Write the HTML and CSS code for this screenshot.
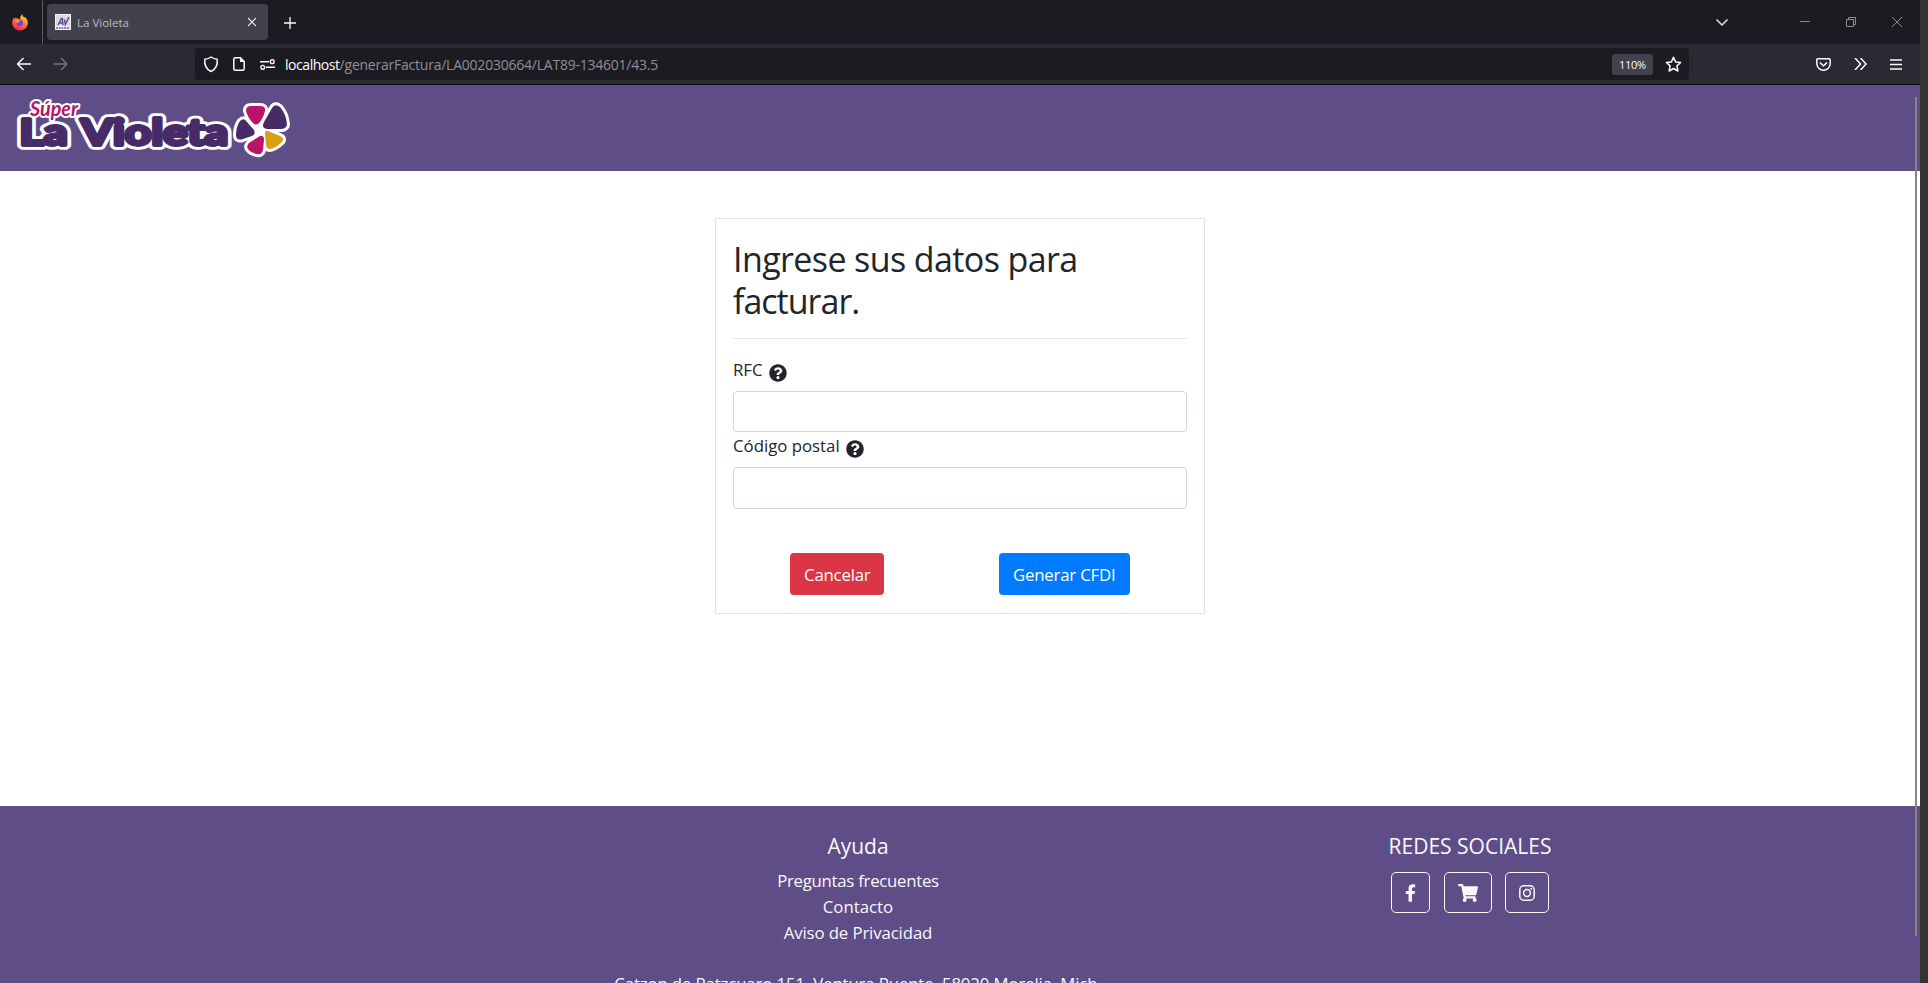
FILE: index.html
```html
<!DOCTYPE html>
<html lang="es">
<head>
<meta charset="utf-8">
<title>La Violeta</title>
<link rel="stylesheet" href="styles.css">
</head>
<body>
<div class="window">
  <div class="tabbar">
    <div class="ff">
      <svg width="16" height="17" viewBox="0 0 16 17"><defs><linearGradient id="fg" x1=".8" y1="0" x2=".3" y2="1"><stop offset="0" stop-color="#ffe23c"/><stop offset=".45" stop-color="#ff8a1c"/><stop offset="1" stop-color="#f5156c"/></linearGradient></defs><path d="M10.3.2C10 2 12 3 12.600 3.800c.2-.7.100-1 .1-1C15 4.500 16 7 15.800 9.300 15.500 13.500 12 16.500 8 16.500S.3 13.300.2 9.200C.1 7 1 5 2 3.800l.3 1.300L4 3.200l.6 1.500C6 4.500 7 4.700 8 5.200 8 3 9 1 10.300.2z" fill="url(#fg)"/><circle cx="7.700" cy="8.900" r="3.300" fill="#7a3fe0"/><path d="M3.500 6.500C6 5 7 6.500 8.300 7 7.500 8.200 6 8 5.500 9 4.500 9 3.500 8 3.500 6.500z" fill="#ff9a22"/></svg>
    </div>
    <div class="tab">
      <svg class="favicon" width="16" height="16" viewBox="0 0 16 16"><path fill="#f7f5f9" d="M0 0h16v16H0z"/><path fill="#dcd8e2" d="M1 1h14v11H1z"/><path d="M3 11 6.500 4.500h.8l.7 6.500M4.500 9h3.500M9.500 5.500l.8 5 3.700-7.500" fill="none" stroke="#5b4a8a" stroke-width="1.400"/><path d="M1 14h14" stroke="#6b5a98" stroke-width="1.500" stroke-dasharray="2 .7"/></svg>
      <span class="tab-title">La Violeta</span>
      <svg class="tab-close" width="10" height="10" viewBox="0 0 10 10"><path d="m1 1 8 8M9 1 1 9" stroke="#e8e8ec" stroke-width="1.100"/></svg>
    </div>
    <svg class="newtab" width="12" height="12" viewBox="0 0 12 12"><path d="M6 0v12M0 6h12" stroke="#fbfbfe" stroke-width="1.300"/></svg>
    <div class="controls">
      <svg width="14" height="9" viewBox="0 0 14 9"><path d="m1.500 1.500 5.500 5.500 5.500-5.500" fill="none" stroke="#e6e6ea" stroke-width="1.500"/></svg>
      <svg class="c-min" width="10" height="10" viewBox="0 0 10 10"><path d="M0 4.500h10" stroke="#8c8b90"/></svg>
      <svg class="c-max" width="10" height="10" viewBox="0 0 10 10"><path d="M.5 2.500h7v7h-7zM2.500 2.500v-2h7v7h-2" fill="none" stroke="#8c8b90"/></svg>
      <svg class="c-close" width="10" height="10" viewBox="0 0 10 10"><path d="m0 0 10 10M10 0 0 10" stroke="#8c8b90"/></svg>
    </div>
  </div>
  <div class="toolbar">
    <svg class="back" width="15" height="14" viewBox="0 0 15 14"><path d="M14 7H.5M6.500 1l-6 6 6 6" fill="none" stroke="#fbfbfe" stroke-width="1.500"/></svg>
    <svg class="fwd" width="15" height="14" viewBox="0 0 15 14"><path d="M.5 7H14M8 1l6 6-6 6" fill="none" stroke="#77767c" stroke-width="1.300"/></svg>
    <div class="urlbar">
      <svg class="shield" width="16" height="17" viewBox="0 0 16 17"><path d="M8 1c2 1.500 4 2 6.200 2.200.5 5-1 9.800-6.200 12.300C2.800 13 1.300 8.200 1.800 3.200 4 3 6 2.500 8 1z" fill="none" stroke="#fbfbfe" stroke-width="1.500" stroke-linejoin="round"/></svg>
      <svg class="page" width="12" height="14" viewBox="0 0 12 14"><path d="M7.500.8H2.300Q.8.800.8 2.300v9.400q0 1.500 1.500 1.500h7.400q1.500 0 1.500-1.500V4.500z" fill="none" stroke="#fbfbfe" stroke-width="1.500"/><path d="M7 .5V5h4.500z" fill="#fbfbfe"/></svg>
      <svg class="perm" width="15" height="11" viewBox="0 0 15 11"><g fill="none" stroke="#fbfbfe" stroke-width="1.400"><path d="M0 2.700h9M6 8.300h9"/><circle cx="12.200" cy="2.700" r="1.900"/><circle cx="2.700" cy="8.300" r="1.900"/></g></svg>
      <span class="url"><span class="host">localhost</span><span class="path">/generarFactura/LA002030664/LAT89-134601/43.5</span></span>
      <span class="zoom">110%</span>
      <svg class="star" width="17" height="17" viewBox="0 0 17 17"><path d="m8.500 1.300 2.100 4.600 5 .6-3.700 3.400 1 5.100-4.400-2.500L4.100 15l1-5.100L1.400 6.500l5-.6z" fill="none" stroke="#fbfbfe" stroke-width="1.500" stroke-linejoin="round"/></svg>
    </div>
    <div class="tools">
      <svg width="15" height="13" viewBox="0 0 15 13"><path d="M2 .8h11q1.200 0 1.200 1.200v3.500a6.700 6.700 0 0 1-13.400 0V2Q.8.800 2 .8z" fill="none" stroke="#fbfbfe" stroke-width="1.500"/><path d="m4 4.500 3.500 3.300L11 4.500" fill="none" stroke="#fbfbfe" stroke-width="1.600"/></svg>
      <svg width="13" height="12" viewBox="0 0 13 12"><path d="m1 0 5.500 6L1 12M6.500 0 12 6l-5.500 6" fill="none" stroke="#fbfbfe" stroke-width="1.500"/></svg>
      <svg width="12" height="11" viewBox="0 0 12 11"><path d="M0 1h12M0 5.500h12M0 10h12" stroke="#fbfbfe" stroke-width="1.300"/></svg>
    </div>
  </div>
  <header class="site-head">
    <svg class="logo" width="290" height="86" viewBox="0 0 290 86">
      <defs>
        <path id="p1" d="M246 26q0-5 5-5h9q6 0 5 5-2 8-6 12-3 3-6 0-5-5-7-12z"/>
        <path id="p2" d="M264 37l8-14q3-5 8-1 6 7 7 17 0 4-5 5h-15q-6-1-3-7z"/>
        <path id="p3" d="M240 36q4-4 7 1l7 8q2 4-2 6l-9 3q-7 2-7-4 0-8 4-14z"/>
        <path id="p4" d="M268 46l12 5q5 2 2 6-6 6-12 7-4 0-4-5l-1-10q0-4 3-3z"/>
        <path id="p5" d="M260 51q4-1 4 4l-1 10q-1 5-6 4-6-1-9-5-2-3 1-6z"/>
      </defs>
      <g class="halo"><g id="wordmark" class="wordmark"><text x="19.500" y="59.500" textLength="48" lengthAdjust="spacingAndGlyphs">La</text><text x="81" y="59.500" textLength="147" lengthAdjust="spacingAndGlyphs">Violeta</text></g></g>
      <use class="letters" href="#wordmark"/>
      <g class="petal-halo"><use href="#p1"/><use href="#p2"/><use href="#p3"/><use href="#p4"/><use href="#p5"/><circle cx="260" cy="44" r="5"/></g>
      <use href="#p1" fill="#ba146a"/><use href="#p2" fill="#472a68"/><use href="#p3" fill="#472a68"/><use href="#p4" fill="#d9a017"/><use href="#p5" fill="#ba146a"/>
      <text class="super" x="30" y="31" textLength="48" lengthAdjust="spacingAndGlyphs">Súper</text>
    </svg>
  </header>
  <main class="content">
    <section class="card">
      <h2>Ingrese sus datos para<br><span class="h2-end">facturar.</span></h2>
      <hr>
      <label class="lbl"><span>RFC</span><svg width="18" height="18" viewBox="0 0 512 512"><path fill="#212529" d="M504 256c0 137-111 248-248 248S8 393 8 256 119 8 256 8s248 111 248 248zM262.700 90c-54.500 0-89.300 23-116.500 63.800-3.600 5.300-2.400 12.400 2.700 16.300l34.700 26.300c5.200 3.900 12.600 3 16.700-2.100 17.900-22.700 30.100-35.800 57.300-35.800 20.400 0 45.700 13.100 45.700 33 0 15-12.400 22.700-32.500 34C247.100 238.500 216 254.900 216 296v4c0 6.600 5.400 12 12 12h56c6.600 0 12-5.400 12-12v-1.300c0-28.500 83.200-29.600 83.200-106.700 0-58-60.200-102-116.500-102zM256 338c-25.400 0-46 20.600-46 46s20.600 46 46 46 46-20.600 46-46-20.600-46-46-46z"/></svg></label>
      <input class="field" type="text">
      <label class="lbl"><span>Código postal</span><svg width="18" height="18" viewBox="0 0 512 512"><path fill="#212529" d="M504 256c0 137-111 248-248 248S8 393 8 256 119 8 256 8s248 111 248 248zM262.700 90c-54.500 0-89.300 23-116.500 63.800-3.600 5.300-2.400 12.400 2.700 16.300l34.700 26.300c5.200 3.900 12.600 3 16.700-2.100 17.900-22.700 30.100-35.800 57.300-35.800 20.400 0 45.700 13.100 45.700 33 0 15-12.400 22.700-32.500 34C247.100 238.500 216 254.900 216 296v4c0 6.600 5.400 12 12 12h56c6.600 0 12-5.400 12-12v-1.300c0-28.500 83.200-29.600 83.200-106.700 0-58-60.200-102-116.500-102zM256 338c-25.400 0-46 20.600-46 46s20.600 46 46 46 46-20.600 46-46-20.600-46-46-46z"/></svg></label>
      <input class="field tall" type="text">
      <div class="actions">
        <button class="btn cancel">Cancelar</button>
        <button class="btn generate">Generar CFDI</button>
      </div>
    </section>
  </main>
  <footer class="foot">
    <div class="help">
      <h5>Ayuda</h5>
      <a class="faq">Preguntas frecuentes</a>
      <a class="contact">Contacto</a>
      <a class="privacy">Aviso de Privacidad</a>
      <p class="address">Catzon de Patzcuaro 151, Ventura Puente, 58020 Morelia, Mich.</p>
    </div>
    <div class="social">
      <h5>REDES SOCIALES</h5>
      <div class="icons">
        <a class="ic fb"><svg width="11" height="18" viewBox="0 0 320 512"><path d="M279.100 288l14.200-92.700h-88.900v-60.100c0-25.400 12.400-50.100 52.200-50.100h40.400V6.300S260.400 0 225.400 0c-73.200 0-121.100 44.400-121.100 124.700v70.600H22.900V288h81.400v224h100.200V288z"/></svg></a>
        <a class="ic cart"><svg width="20" height="18" viewBox="0 0 576 512"><path d="M528.100 301.300l47.300-208C578.800 78.300 567.400 64 552 64H159.200l-9.200-44.800C147.800 8 137.900 0 126.500 0H24C10.700 0 0 10.700 0 24v16c0 13.300 10.700 24 24 24h69.900l70.200 343.400C147.300 417.100 136 435.200 136 456c0 30.900 25.100 56 56 56s56-25.100 56-56c0-15.700-6.400-29.800-16.800-40h209.600C430.400 426.200 424 440.300 424 456c0 30.900 25.100 56 56 56s56-25.100 56-56c0-22.200-12.900-41.300-31.600-50.400l5.500-24.300c3.400-15-8-29.300-23.400-29.300H218.100l-6.500-32h293.100c11.200 0 20.900-7.800 23.400-18.700z"/></svg></a>
        <a class="ic ig"><svg width="16" height="16" viewBox="0 0 16 16"><rect x=".8" y=".8" width="14.400" height="14.400" rx="4" fill="none" stroke="#f8f9fa" stroke-width="1.500"/><circle cx="8" cy="8" r="3.400" fill="none" stroke="#f8f9fa" stroke-width="1.500"/><circle cx="12.200" cy="3.800" r="1"/></svg></a>
      </div>
    </div>
  </footer>
  <div class="scroll"></div>
</div>
</body>
</html>
```
FILE: styles.css
```css
* { box-sizing: border-box; }
body { margin: 0; background: #333331; height: 983px; overflow: hidden; font-family: "Open Sans", "Noto Sans", sans-serif; }
svg { display: block; flex: none; }
.window { position: relative; width: 1920px; height: 983px; display: flex; flex-direction: column; background: #fff; overflow: hidden; }

.tabbar { height: 44px; flex: none; background: #1c1b22; display: flex; align-items: center; }
.ff { width: 43px; height: 44px; border-right: 1px solid #5a595f; padding: 14px 0 0 12px; }
.tab { width: 221px; height: 36px; margin-left: 4px; background: #42414d; border-radius: 4px; display: flex; align-items: center; padding: 0 11px 0 8px; }
.tab-title { margin-left: 6px; font-size: 11.5px; color: #bdbcc4; flex: 1; }
.newtab { margin-left: 15.5px; margin-top: 1px; }
.controls { margin-left: auto; display: flex; align-items: center; padding-right: 18px; }
.c-min { margin-left: 71px; }
.c-max, .c-close { margin-left: 36px; }

.toolbar { height: 41px; flex: none; background: #2b2a33; border-bottom: 1px solid #0c0c0d; display: flex; align-items: center; }
.back { margin-left: 17px; }
.fwd { margin-left: 21px; }
.urlbar { width: 1494px; height: 32px; margin-left: 127px; background: #1c1b22; border-radius: 4px; display: flex; align-items: center; padding: 0 7px 0 8px; }
.page { margin-left: 14px; }
.perm { margin-left: 15px; }
.url { margin-left: 10px; padding-top: 1px; flex: 1; font-size: 14px; white-space: nowrap; }
.host { color: #fbfbfe; letter-spacing: -0.45px; }
.path { color: #8f8f96; letter-spacing: -0.23px; }
.zoom { width: 41px; height: 21px; background: #42414d; border-radius: 3px; color: #fbfbfe; font-size: 11px; line-height: 21px; text-align: center; letter-spacing: -0.3px; }
.star { margin-left: 12px; }
.tools { margin-left: auto; display: flex; align-items: center; gap: 23px; padding-right: 18px; }

.site-head { height: 86px; flex: none; background: #5f4d87; }
.wordmark { font: 700 36px Lato, sans-serif; stroke-linejoin: round; }
.halo { fill: #fff; stroke: #fff; stroke-width: 9.5px; }
.letters { fill: #472a68; stroke: #472a68; stroke-width: 3.8px; }
.petal-halo { fill: #fff; stroke: #fff; stroke-width: 6px; stroke-linejoin: round; }
.super { font: italic 700 20px Lato, sans-serif; fill: #ba146a; stroke: #fff; stroke-width: 4px; stroke-linejoin: round; paint-order: stroke; }

.content { height: 635px; flex: none; padding-top: 47px; }
.card { width: 490px; height: 396px; margin: 0 auto; border: 1px solid #dee2e6; padding: 19px 17px 0; color: #212529; }
h2 { margin: 0; font-size: 34px; line-height: 42px; font-weight: 400; letter-spacing: -0.6px; }
.h2-end { letter-spacing: -1px; }
hr { margin: 16px 0 17px; border: 0; border-top: 1px solid #e3e3e4; }
.lbl { display: flex; height: 35px; font-size: 16.8px; line-height: 28px; }
.lbl svg { margin: 8px 0 0 6px; }
.field { display: block; width: 100%; height: 41px; border: 1px solid #ced4da; border-radius: 4px; background: #fff; padding: 0 13px; }
.tall { height: 42px; }
.actions { display: flex; justify-content: space-around; margin-top: 44px; }
.btn { height: 42px; border: 0; border-radius: 4px; color: #fff; font: 16.8px "Open Sans", sans-serif; letter-spacing: -0.2px; padding: 1px 0 0; white-space: nowrap; }
.cancel { width: 94px; background: #dc3545; }
.generate { width: 131px; background: #007bff; }

.foot { height: 177px; flex: none; background: #5f4d87; color: #f8f9fa; display: grid; grid-template-columns: 612px 492px 732px; }
.help, .social { display: flex; flex-direction: column; align-items: center; padding-top: 27px; }
.help { grid-column: 2; }
.social { grid-column: 3; }
h5 { margin: 0 0 9px; font-size: 21px; line-height: 26px; font-weight: 400; white-space: nowrap; }
.help a { font-size: 16.8px; line-height: 26px; }
.faq { letter-spacing: -0.27px; }
.privacy { letter-spacing: -0.12px; }
.address { margin: 25px 0 0; font-size: 16.8px; line-height: 26px; white-space: nowrap; letter-spacing: -0.13px; }
.icons { display: flex; margin-top: 4px; }
.ic { height: 41px; border: 1px solid #f8f9fa; border-radius: 5px; display: flex; align-items: center; justify-content: center; fill: #f8f9fa; }
.fb { width: 39px; }
.cart { width: 48px; margin: 0 13px 0 14px; }
.ig { width: 44px; }
.scroll { position: absolute; left: 1915px; top: 97px; width: 2px; height: 839px; background: #858585; }
```
